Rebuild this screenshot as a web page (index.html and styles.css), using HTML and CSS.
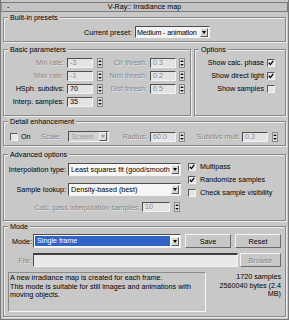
FILE: index.html
```html
<!DOCTYPE html>
<html>
<head>
<meta charset="utf-8">
<link rel="stylesheet" href="styles.css">
</head>
<body>
<div class="panel">
  <div class="title"><span class="minus">-</span><span class="ttl">V-Ray:: Irradiance map</span><span class="minus"></span></div>

  <fieldset class="grp presets">
    <legend>Built-in presets</legend>
    <div class="row preset-row">
      <span class="lbl w-preset">Current preset:</span>
      <div class="dd w-presetdd"><span class="txt tight">Medium - animation</span><span class="arr"></span></div>
    </div>
  </fieldset>

  <div class="two">
    <fieldset class="grp basic">
      <legend>Basic parameters</legend>
      <div class="row r13">
        <span class="lbl w-l1 dis">Min rate:</span><span class="num dis">-3</span><svg class="spin" viewBox="0 0 6 10"><rect x=".5" y=".5" width="5" height="9" fill="#dcdcdc" stroke="#8a8a8a"/><path d="M3 2L4.8 4H1.2z M1.2 6H4.8L3 8z" fill="#111"/></svg>
        <span class="lbl w-l2 dis">Clr thresh:</span><span class="num dis">0.3</span><svg class="spin s3" viewBox="0 0 6 10"><rect x=".5" y=".5" width="5" height="9" fill="#dcdcdc" stroke="#8a8a8a"/><path d="M3 2L4.8 4H1.2z M1.2 6H4.8L3 8z" fill="#111"/></svg>
      </div>
      <div class="row r13">
        <span class="lbl w-l1 dis">Max rate:</span><span class="num dis">-1</span><svg class="spin" viewBox="0 0 6 10"><rect x=".5" y=".5" width="5" height="9" fill="#dcdcdc" stroke="#8a8a8a"/><path d="M3 2L4.8 4H1.2z M1.2 6H4.8L3 8z" fill="#111"/></svg>
        <span class="lbl w-l2 dis">Nrm thresh:</span><span class="num dis">0.2</span><svg class="spin s3" viewBox="0 0 6 10"><rect x=".5" y=".5" width="5" height="9" fill="#dcdcdc" stroke="#8a8a8a"/><path d="M3 2L4.8 4H1.2z M1.2 6H4.8L3 8z" fill="#111"/></svg>
      </div>
      <div class="row r13">
        <span class="lbl w-l1">HSph. subdivs:</span><span class="num">70</span><svg class="spin" viewBox="0 0 6 10"><rect x=".5" y=".5" width="5" height="9" fill="#dcdcdc" stroke="#8a8a8a"/><path d="M3 2L4.8 4H1.2z M1.2 6H4.8L3 8z" fill="#111"/></svg>
        <span class="lbl w-l2 dis">Dist thresh:</span><span class="num dis">0.5</span><svg class="spin s3" viewBox="0 0 6 10"><rect x=".5" y=".5" width="5" height="9" fill="#dcdcdc" stroke="#8a8a8a"/><path d="M3 2L4.8 4H1.2z M1.2 6H4.8L3 8z" fill="#111"/></svg>
      </div>
      <div class="row r13">
        <span class="lbl w-l1">Interp. samples:</span><span class="num">35</span><svg class="spin" viewBox="0 0 6 10"><rect x=".5" y=".5" width="5" height="9" fill="#dcdcdc" stroke="#8a8a8a"/><path d="M3 2L4.8 4H1.2z M1.2 6H4.8L3 8z" fill="#111"/></svg>
      </div>
    </fieldset>

    <fieldset class="grp options">
      <legend>Options</legend>
      <div class="row r13 opt"><span>Show calc. phase</span><span class="chk"><svg viewBox="0 0 6 6"><path d="M.8 2.8L2.4 4.6L5.3 .9" fill="none" stroke="#000" stroke-width="1.3"/></svg></span></div>
      <div class="row r13 opt"><span>Show direct light</span><span class="chk"><svg viewBox="0 0 6 6"><path d="M.8 2.8L2.4 4.6L5.3 .9" fill="none" stroke="#000" stroke-width="1.3"/></svg></span></div>
      <div class="row r13 opt"><span>Show samples</span><span class="chk"></span></div>
    </fieldset>
  </div>

  <fieldset class="grp detail">
    <legend>Detail enhancement</legend>
    <div class="row r13">
      <span class="chk on-chk"></span><span class="on-lbl">On</span>
      <span class="lbl w-scale dis">Scale:</span>
      <div class="dd ddis w-scaledd"><span class="txt">Screen</span><span class="arr adis"></span></div>
      <span class="lbl w-radius dis">Radius:</span><span class="num dis">60.0</span><svg class="spin s3" viewBox="0 0 6 10"><rect x=".5" y=".5" width="5" height="9" fill="#dcdcdc" stroke="#8a8a8a"/><path d="M3 2L4.8 4H1.2z M1.2 6H4.8L3 8z" fill="#111"/></svg>
      <span class="lbl w-subd dis">Subdivs mult.</span><span class="num dis">0.3</span><svg class="spin" viewBox="0 0 6 10"><rect x=".5" y=".5" width="5" height="9" fill="#dcdcdc" stroke="#8a8a8a"/><path d="M3 2L4.8 4H1.2z M1.2 6H4.8L3 8z" fill="#111"/></svg>
    </div>
  </fieldset>

  <fieldset class="grp advanced">
    <legend>Advanced options</legend>
    <div class="adv">
      <div class="adv-left">
        <div class="row r14">
          <span class="lbl w-adv">Interpolation type:</span>
          <div class="dd w-advdd"><span class="txt">Least squares fit (good/smooth</span><span class="arr"></span></div>
        </div>
        <div class="row r14 mt6">
          <span class="lbl w-adv">Sample lookup:</span>
          <div class="dd w-advdd"><span class="txt">Density-based (best)</span><span class="arr"></span></div>
        </div>
        <div class="row r12 mt5">
          <span class="lbl w-calc dis">Calc. pass interpolation samples:</span><span class="num w28 dis">10</span><svg class="spin" viewBox="0 0 6 10"><rect x=".5" y=".5" width="5" height="9" fill="#dcdcdc" stroke="#8a8a8a"/><path d="M3 2L4.8 4H1.2z M1.2 6H4.8L3 8z" fill="#111"/></svg>
        </div>
      </div>
      <div class="adv-right">
        <div class="row r13"><span class="chk"><svg viewBox="0 0 6 6"><path d="M.8 2.8L2.4 4.6L5.3 .9" fill="none" stroke="#000" stroke-width="1.3"/></svg></span><span class="ck-lbl">Multipass</span></div>
        <div class="row r13"><span class="chk"><svg viewBox="0 0 6 6"><path d="M.8 2.8L2.4 4.6L5.3 .9" fill="none" stroke="#000" stroke-width="1.3"/></svg></span><span class="ck-lbl">Randomize samples</span></div>
        <div class="row r13"><span class="chk"></span><span class="ck-lbl">Check sample visibility</span></div>
      </div>
    </div>
  </fieldset>

  <fieldset class="grp mode">
    <legend>Mode</legend>
    <div class="row r14">
      <span class="lbl w-mode">Mode:</span>
      <div class="dd w-modedd"><span class="txt sel">Single frame</span><span class="arr"></span></div>
      <span class="btn w-save">Save</span>
      <span class="btn w-reset">Reset</span>
    </div>
    <div class="row r14 mt5">
      <span class="lbl w-mode dis">File:</span>
      <span class="file"></span>
      <span class="btn w-browse dis">Browse</span>
    </div>
    <div class="desc-row">
      <div class="desc">A new irradiance map is created for each frame.<br>This mode is suitable for still images and animations with<br>moving objects.</div>
      <div class="stats">1720 samples<br>2560040 bytes (2.4<br>MB)</div>
    </div>
  </fieldset>
</div>
</body>
</html>
```

FILE: styles.css
```css
* { box-sizing: border-box; margin: 0; padding: 0; }
html, body { background: #c8c8c8; }
body {
  width: 289px;
  height: 320px;
  overflow: hidden;
  font-family: "Liberation Sans", Arial, sans-serif;
  font-size: 7.2px;
  line-height: 9px;
  color: #000;
}
.panel {
  width: 289px;
  height: 320px;
  border-left: 1px solid #7a7a7a;
  border-right: 1px solid #7a7a7a;
  border-bottom: 1px solid #7a7a7a;
  padding: 2px 2px 0 2px;
}
.title {
  margin: 0 -2px;
  height: 10px;
  display: flex;
  align-items: center;
  border: 1px solid #7a7a7a;
  border-left-color: #9a9a9a;
  background: #c4c4c4;
  line-height: 8px;
}
.title .minus { width: 24px; padding-left: 5px; flex: none; }
.title .ttl { flex: 1; text-align: center; }

.grp {
  border: 1px solid #888;
  box-shadow: inset 1px 1px 0 #ececec, 1px 1px 0 #ececec;
  padding: 0;
  margin: 0;
  min-width: 0;
}
.grp > legend {
  margin-left: 4px;
  padding: 0 2px;
  height: 9px;
  line-height: 9px;
  background: #c8c8c8;
}
.row { display: flex; align-items: center; white-space: nowrap; }
.r12 { height: 12px; }
.r13 { height: 13px; }
.r14 { height: 14px; }
.mt5 { margin-top: 5px; }
.mt6 { margin-top: 6px; }
.lbl { flex: none; text-align: right; overflow: hidden; }
.dis { color: #858585; text-shadow: 0.6px 0.6px 0 rgba(255,255,255,.55); }

.num {
  flex: none;
  width: 26px;
  height: 10px;
  line-height: 8px;
  border: 1px solid;
  border-color: #4e4e4e #f2f2f2 #f2f2f2 #4e4e4e;
  background: #e3e3e3;
  padding-left: 2px;
  overflow: hidden;
}
.w28 { width: 28px; }
.spin { flex: none; width: 6px; height: 10px; margin-left: 4px; display: block; }
.s3 { margin-left: 3px; }

.chk {
  flex: none;
  width: 8px;
  height: 8px;
  border: 1px solid;
  border-color: #5a5a5a #f2f2f2 #f2f2f2 #5a5a5a;
  background: #e6e6e6;
  display: flex;
  align-items: center;
  justify-content: center;
}
.chk svg { width: 6px; height: 6px; display: block; }

.dd {
  flex: none;
  display: flex;
  align-items: center;
  border: 1px solid;
  border-color: #4e4e4e #f2f2f2 #f2f2f2 #4e4e4e;
  background: #f3f3f3;
  padding: 0 1px 0 1px;
  overflow: hidden;
}
.dd .txt { flex: 1; overflow: hidden; white-space: nowrap; padding-left: 1px; line-height: 9px; }
.dd .tight { letter-spacing: -0.2px; padding-left: 0; }
.arr {
  flex: none;
  width: 8px;
  height: 9px;
  border: 1px solid;
  border-color: #f4f4f4 #5c5c5c #5c5c5c #f4f4f4;
  background: #d4d4d4;
  display: flex;
  align-items: center;
  justify-content: center;
}
.arr::after {
  content: "";
  border-left: 2.5px solid transparent;
  border-right: 2.5px solid transparent;
  border-top: 3px solid #000;
}
.ddis { background: #d2d2d2; }
.ddis .txt { color: #9a9a9a; }
.adis { background: #dadada; }
.adis::after { border-top-color: #9a9a9a; }

.btn {
  flex: none;
  height: 14px;
  display: flex;
  align-items: center;
  justify-content: center;
  border: 1px solid;
  border-color: #f4f4f4 #6a6a6a #6a6a6a #f4f4f4;
  background: #c8c8c8;
}

/* built-in presets */
.presets { margin-top: 1px; padding: 4px 0 3px 0; }
.w-preset { width: 128px; margin-right: 3px; }
.w-presetdd { width: 75px; height: 12px; }

/* basic & options */
.two { display: flex; gap: 3px; margin-top: 3px; }
.basic { width: 188px; flex: none; padding: 2px 0 7px 0; }
.options { flex: 1; padding: 2px 0 7px 0; }
.w-l1 { width: 60px; margin-right: 3px; }
.w-l2 { width: 44px; margin-right: 3px; }
.opt { justify-content: flex-end; padding-right: 10px; }
.opt span:first-child { margin-right: 3px; }

/* detail */
.detail { margin-top: 1px; padding: 4px 0 2px 0; }
.on-chk { margin-left: 6px; }
.on-lbl { width: 10px; margin-left: 3px; flex: none; }
.w-scale { width: 30px; margin-right: 7px; }
.w-scaledd { width: 41px; height: 11px; }
.w-radius { width: 38px; margin-right: 3px; }
.w-subd { width: 55px; margin-right: 2px; }

/* advanced */
.advanced { margin-top: 4px; padding: 0 0 7px 0; }
.adv { display: flex; }
.adv-left { width: 177px; flex: none; padding-top: 3px; }
.adv-right { margin-left: 7px; padding-top: 1px; }
.w-adv { width: 62px; margin-right: 2px; }
.w-advdd { width: 113px; height: 13px; background: #f6f6f6; }
.w-calc { width: 136px; margin-right: 2px; }
.ck-lbl { margin-left: 4px; }

/* mode */
.mode { margin-top: 1px; padding: 3px 0 4px 0; }
.w-mode { width: 28px; margin-right: 1px; }
.w-modedd { width: 148px; height: 14px; background: #fbfbfb; }
.w-modedd .sel {
  background: #2f63c8;
  color: #fff;
  height: 10px;
  line-height: 10px;
  margin-right: 1px;
  padding-left: 2px;
}
.w-save { width: 46px; margin-left: 4px; }
.w-reset { width: 46px; margin-left: 4px; }
.file {
  flex: none;
  width: 205px;
  height: 14px;
  border: 1px solid;
  border-top-width: 2px;
  border-color: #3e3e3e #f2f2f2 #f2f2f2 #4e4e4e;
  background: #e9e9e9;
}
.w-browse { width: 41px; margin-left: 2px; }
.desc-row { display: flex; margin-top: 5px; height: 40px; }
.desc {
  flex: none;
  width: 198px;
  height: 40px;
  margin-left: 4px;
  border: 1px solid;
  border-color: #8a8a8a #f6f6f6 #f6f6f6 #8a8a8a;
  padding: 1px 1px 0 1px;
  line-height: 8.6px;
  white-space: nowrap;
}
.stats {
  flex: 1;
  text-align: right;
  padding: 1px 4px 0 0;
  line-height: 8.6px;
  white-space: nowrap;
}
```
